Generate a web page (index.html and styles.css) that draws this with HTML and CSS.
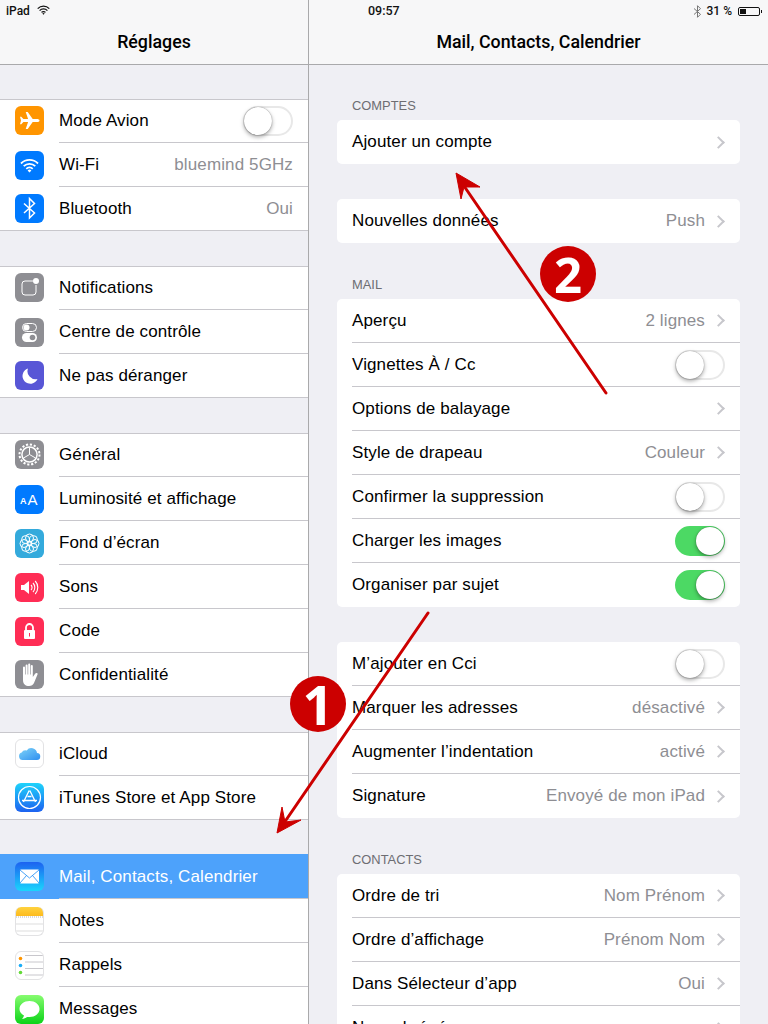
FILE: index.html
```html
<!DOCTYPE html>
<html lang="fr">
<head>
<meta charset="utf-8">
<title>Réglages</title>
<link rel="stylesheet" href="styles.css">
</head>
<body>
<div class="app">
  <aside class="side">
    <header class="nav">
      <div class="status">
        <span>iPad</span>
        <svg class="st-wifi" viewBox="0 0 13 10"><path d="M.7 3.600a8.200 8.200 0 0 1 11.600 0M2.600 5.600a5.400 5.400 0 0 1 7.800 0M4.500 7.400a2.800 2.800 0 0 1 4 0" fill="none" stroke="#111" stroke-width="1.300"/><path d="M6.500 9.800 5.300 8.500a1.700 1.700 0 0 1 2.400 0z" fill="#111"/></svg>
      </div>
      <h1 class="title">Réglages</h1>
    </header>
    <div class="side-body">
      <section class="group">
        <div class="row"><span class="ic ic-orange"><svg viewBox="0 0 29 29"><path d="M24.500 14.500c0-1-1.200-1.500-2.800-1.500h-4l-5-7h-2l2.400 7H8.400L6.300 10.700H5l1 3.800-1 3.800h1.300L8.400 16h4.700L10.700 23h2l5-7h4c1.600 0 2.800-.5 2.800-1.500z" fill="#fff"/></svg></span>
          <div class="body"><span class="lbl">Mode Avion</span><span class="sw"></span></div></div>
        <div class="row"><span class="ic ic-blue"><svg viewBox="0 0 29 29"><path d="M6 12.500a12 12 0 0 1 17 0M8.700 15.200a8.300 8.300 0 0 1 11.600 0M11.300 17.800a4.500 4.500 0 0 1 6.400 0" fill="none" stroke="#fff" stroke-width="1.800"/><path d="M14.500 21.500l-1.900-2a2.700 2.700 0 0 1 3.800 0z" fill="#fff"/></svg></span>
          <div class="body"><span class="lbl">Wi-Fi</span><span class="val">bluemind 5GHz</span></div></div>
        <div class="row"><span class="ic ic-blue"><svg viewBox="0 0 29 29"><path d="M9 9.500 19.500 19l-5 5V4.500l5 5L9 19" fill="none" stroke="#fff" stroke-width="1.500"/></svg></span>
          <div class="body"><span class="lbl">Bluetooth</span><span class="val">Oui</span></div></div>
      </section>
      <section class="group">
        <div class="row"><span class="ic ic-gray"><svg viewBox="0 0 29 29"><path d="M18 8H10a3 3 0 0 0-3 3v8a3 3 0 0 0 3 3h8a3 3 0 0 0 3-3v-7" fill="none" stroke="#fff" stroke-width="1"/><circle cx="21" cy="8" r="3" fill="#fff"/></svg></span>
          <div class="body"><span class="lbl">Notifications</span></div></div>
        <div class="row"><span class="ic ic-gray"><svg viewBox="0 0 29 29"><rect x="7.500" y="5.500" width="14" height="8" rx="4" fill="none" stroke="#fff"/><circle cx="11.500" cy="9.500" r="3" fill="#fff"/><rect x="7" y="15" width="15" height="9" rx="4.500" fill="#fff"/><circle cx="17.500" cy="19.500" r="2.800" fill="#8e8e93"/></svg></span>
          <div class="body"><span class="lbl">Centre de contrôle</span></div></div>
        <div class="row"><span class="ic ic-purple"><svg viewBox="0 0 29 29"><path d="M13 7.500a7.800 7.800 0 1 0 9.500 10.500A8 8 0 0 1 13 7.500z" fill="#fff"/></svg></span>
          <div class="body"><span class="lbl">Ne pas déranger</span></div></div>
      </section>
      <section class="group">
        <div class="row"><span class="ic ic-gray"><svg viewBox="0 0 29 29"><circle cx="14.500" cy="14.500" r="10" fill="none" stroke="#fff" stroke-width="2" stroke-dasharray="2.200 1.730"/><circle cx="14.500" cy="14.500" r="7.600" fill="none" stroke="#fff" stroke-width="1.500"/><path d="M14.500 14.500 14.500 7.500M14.500 14.500 8.500 18M14.500 14.500 20.500 18" stroke="#fff" stroke-width="1"/></svg></span>
          <div class="body"><span class="lbl">Général</span></div></div>
        <div class="row"><span class="ic ic-blue"><svg viewBox="0 0 29 29"><text x="5" y="19" class="aa-s">A</text><text x="12.500" y="20" class="aa-b">A</text></svg></span>
          <div class="body"><span class="lbl">Luminosité et affichage</span></div></div>
        <div class="row"><span class="ic ic-sky"><svg viewBox="0 0 29 29"><g fill="none" stroke="#fff" stroke-width="1"><circle cx="14.500" cy="9" r="4"/><circle cx="14.500" cy="20" r="4"/><circle cx="9" cy="14.500" r="4"/><circle cx="20" cy="14.500" r="4"/><circle cx="10.600" cy="10.600" r="4"/><circle cx="18.400" cy="10.600" r="4"/><circle cx="10.600" cy="18.400" r="4"/><circle cx="18.400" cy="18.400" r="4"/><circle cx="14.500" cy="14.500" r="2.500"/></g></svg></span>
          <div class="body"><span class="lbl">Fond d’écran</span></div></div>
        <div class="row"><span class="ic ic-pink"><svg viewBox="0 0 29 29"><path d="M6 12h3l5-4v13l-5-4H6z" fill="#fff"/><path d="M16 12a3.500 3.500 0 0 1 0 5M18 10a6.500 6.500 0 0 1 0 9M20.200 8a9.500 9.500 0 0 1 0 13" fill="none" stroke="#fff" stroke-width="1.100"/></svg></span>
          <div class="body"><span class="lbl">Sons</span></div></div>
        <div class="row"><span class="ic ic-pink"><svg viewBox="0 0 29 29"><path d="M11 13V10.500a3.500 3.500 0 0 1 7 0V13" fill="none" stroke="#fff" stroke-width="1.800"/><rect x="9" y="13" width="11" height="9" rx="1" fill="#fff"/><rect x="14" y="16" width="1" height="3.500" fill="#ff2d55"/></svg></span>
          <div class="body"><span class="lbl">Code</span></div></div>
        <div class="row"><span class="ic ic-gray"><svg viewBox="0 0 29 29"><path d="M8 7.500a1 1 0 0 1 2 0v7h.6V5.500a1 1 0 0 1 2 0v9h.6V4.500a1 1 0 0 1 2 0v10h.6V6a1 1 0 0 1 2 0v11l2.500-3.500c1-1.200 2.800-.4 2.300.8L19 23c-1 2-2.500 3-5 3-3.500 0-6-2-6-6z" fill="#fff"/></svg></span>
          <div class="body"><span class="lbl">Confidentialité</span></div></div>
      </section>
      <section class="group">
        <div class="row"><span class="ic ic-white"><svg viewBox="0 0 27 27"><defs><linearGradient id="cloud" x1="0" x2="1" y1="0" y2="1"><stop offset="0" stop-color="#7fd4f8"/><stop offset="1" stop-color="#2f8ff0"/></linearGradient></defs><path d="M6.500 20a3.800 3.800 0 0 1-.8-7.400 4.200 4.200 0 0 1 5-2.200 5.700 5.700 0 0 1 10.300 2.600 3.500 3.500 0 0 1-.5 7z" fill="url(#cloud)"/></svg></span>
          <div class="body"><span class="lbl">iCloud</span></div></div>
        <div class="row"><span class="ic ic-store"><svg viewBox="0 0 29 29"><circle cx="14.500" cy="14.500" r="11" fill="none" stroke="#fff" stroke-width="1.200"/><path d="M14.800 7.500 20.500 19M14.200 7.500 8.500 19M7 17.500h15M12.500 13.500h4" fill="none" stroke="#fff" stroke-width="1.300"/></svg></span>
          <div class="body"><span class="lbl">iTunes Store et App Store</span></div></div>
      </section>
      <section class="group group-sel">
        <div class="row row-sel"><span class="ic ic-mail"><svg viewBox="0 0 29 29"><rect x="5" y="7.500" width="19" height="14" rx="1" fill="#fff"/><path d="M5 8l9.500 8L24 8M5 21l6.500-7.500M24 21l-6.500-7.500" fill="none" stroke="#1a8cf5" stroke-width=".8"/></svg></span>
          <div class="body"><span class="lbl">Mail, Contacts, Calendrier</span></div></div>
        <div class="row"><span class="ic ic-notes"><svg viewBox="0 0 27 27"><path d="M0 9.500h27" stroke="#b5b5b5" stroke-dasharray="1 1"/><path d="M0 16.500h27M0 23.500h27" stroke="#ddd"/></svg></span>
          <div class="body"><span class="lbl">Notes</span></div></div>
        <div class="row"><span class="ic ic-white"><svg viewBox="0 0 27 27"><circle cx="4.500" cy="6.500" r="1.800" fill="#ff9500"/><circle cx="4.500" cy="13.500" r="1.800" fill="#1badf8"/><circle cx="4.500" cy="20.500" r="1.800" fill="#63da38"/><path d="M9 3.500h18M9 10h18M9 16.500h18M9 23h18" stroke="#c8c7cc"/></svg></span>
          <div class="body"><span class="lbl">Rappels</span></div></div>
        <div class="row"><span class="ic ic-msg"><svg viewBox="0 0 29 29"><path d="M14.500 6c-5.500 0-10 3.500-10 8 0 2.800 1.800 5.200 4.500 6.600-.3 1.400-1 2.400-2 3.200 2 0 3.800-.8 5-1.900.8.100 1.600.1 2.500.1 5.500 0 10-3.500 10-8s-4.500-8-10-8z" fill="#fff"/></svg></span>
          <div class="body"><span class="lbl">Messages</span></div></div>
      </section>
    </div>
  </aside>
  <main class="detail">
    <header class="nav">
      <div class="status status-main">
        <span class="time">09:57</span>
        <div class="st-right">
          <svg class="st-bt" viewBox="0 0 9 13"><path d="M1 3.500l6.500 5.800-3 3V.7l3 3-6.500 5.800" fill="none" stroke="#777" stroke-width="1"/></svg>
          <span>31 %</span>
          <span class="batt"><span class="batt-fill"></span></span>
        </div>
      </div>
      <h1 class="title">Mail, Contacts, Calendrier</h1>
    </header>
    <div class="detail-body">
      <section>
        <h2 class="sec">COMPTES</h2>
        <div class="card">
          <div class="crow"><span class="lbl">Ajouter un compte</span><span class="chev"></span></div>
        </div>
      </section>
      <section>
        <div class="card">
          <div class="crow"><span class="lbl">Nouvelles données</span><span class="val">Push</span><span class="chev"></span></div>
        </div>
      </section>
      <section>
        <h2 class="sec">MAIL</h2>
        <div class="card">
          <div class="crow"><span class="lbl">Aperçu</span><span class="val">2 lignes</span><span class="chev"></span></div>
          <div class="crow"><span class="lbl">Vignettes À / Cc</span><span class="sw"></span></div>
          <div class="crow"><span class="lbl">Options de balayage</span><span class="chev"></span></div>
          <div class="crow"><span class="lbl">Style de drapeau</span><span class="val">Couleur</span><span class="chev"></span></div>
          <div class="crow"><span class="lbl">Confirmer la suppression</span><span class="sw"></span></div>
          <div class="crow"><span class="lbl">Charger les images</span><span class="sw sw-on"></span></div>
          <div class="crow"><span class="lbl">Organiser par sujet</span><span class="sw sw-on"></span></div>
        </div>
      </section>
      <section>
        <div class="card">
          <div class="crow"><span class="lbl">M’ajouter en Cci</span><span class="sw"></span></div>
          <div class="crow"><span class="lbl">Marquer les adresses</span><span class="val">désactivé</span><span class="chev"></span></div>
          <div class="crow"><span class="lbl">Augmenter l’indentation</span><span class="val">activé</span><span class="chev"></span></div>
          <div class="crow"><span class="lbl">Signature</span><span class="val">Envoyé de mon iPad</span><span class="chev"></span></div>
        </div>
      </section>
      <section>
        <h2 class="sec">CONTACTS</h2>
        <div class="card">
          <div class="crow"><span class="lbl">Ordre de tri</span><span class="val">Nom Prénom</span><span class="chev"></span></div>
          <div class="crow"><span class="lbl">Ordre d’affichage</span><span class="val">Prénom Nom</span><span class="chev"></span></div>
          <div class="crow"><span class="lbl">Dans Sélecteur d’app</span><span class="val">Oui</span><span class="chev"></span></div>
          <div class="crow"><span class="lbl">Nom abrégé</span><span class="chev"></span></div>
        </div>
      </section>
    </div>
  </main>
  <svg class="arrows" viewBox="0 0 768 1024">
    <path d="M428 613 284 823M606 393 464 186" fill="none" stroke="#cc0000" stroke-width="3" stroke-linecap="round"/>
    <path d="M277 833 282 807 285 822 301 820z" fill="#cc0000" stroke="#cc0000" stroke-linejoin="round"/>
    <path d="M456 173 480 187 464 187 461 199z" fill="#cc0000" stroke="#cc0000" stroke-linejoin="round"/>
  </svg>
  <div class="badge badge-one">1</div>
  <div class="badge badge-two">2</div>
</div>
</body>
</html>
```

FILE: styles.css
```css
* { box-sizing: border-box; }
html, body { margin: 0; padding: 0; }
body { font-family: "Liberation Sans", Arial, sans-serif; color: #000; }
.app { position: relative; display: flex; width: 768px; height: 1024px; overflow: hidden; background: #efeff4; }
.side { width: 309px; flex: none; border-right: 1px solid #a9a9ab; }
.detail { flex: 1; min-width: 0; }

.nav { height: 65px; background: #f7f7f8; border-bottom: 1px solid #a9a9ab; display: flex; flex-direction: column; }
.status { height: 22px; padding: 0 0 0 6px; display: flex; align-items: center; gap: 7px; font-family: Roboto, "Liberation Sans", sans-serif; font-weight: 500; font-size: 12px; color: #111; }
.st-wifi { width: 13px; height: 10px; margin-top: -2px; }
.status-main { position: relative; justify-content: flex-end; padding: 0 8px 0 0; }
.time { position: absolute; left: 59px; top: 3px; font-size: 12.500px; }
.st-right { display: flex; align-items: center; gap: 5px; }
.st-bt { width: 9px; height: 13px; }
.batt { position: relative; display: block; width: 22px; height: 9px; border: 1px solid #111; border-radius: 2px; padding: 1px; margin-left: 1px; }
.batt::after { content: ""; position: absolute; right: -3px; top: 2px; width: 1px; height: 3px; background: #111; }
.batt-fill { display: block; width: 6px; height: 5px; background: #111; }
.title { margin: 0; flex: 1; display: flex; align-items: center; justify-content: center; padding-bottom: 4px; font-family: Roboto, "Liberation Sans", sans-serif; font-size: 17.800px; font-weight: 500; }

.side-body { padding-top: 34px; display: flex; flex-direction: column; gap: 35px; }
.group { background: #fff; border-top: 1px solid #c8c7cc; border-bottom: 1px solid #c8c7cc; }
.group-sel { border-top: 0; margin-top: -1px; }
.row { display: flex; align-items: center; height: 44px; padding-left: 15px; }
.group .row:first-child, .group .row:last-child { height: 43px; }
.group .row:first-child .ic { margin-top: -2px; }
.group-sel .row:first-child { height: 45px; }
.group-sel .row:first-child .ic { margin-top: 0; }
.group-sel .row:first-child .body { padding-top: 1px; }
.group-sel .row:last-child { height: 44px; }
.row:last-child .body { border-bottom: 0; }
.row-sel { background: #4da2fb; color: #fff; }
.body { flex: 1; height: 100%; margin-left: 15px; padding-right: 15px; display: flex; align-items: center; justify-content: space-between; border-bottom: 1px solid #c8c7cc; }
.lbl { font-size: 17px; letter-spacing: .12px; }
.val { font-size: 17px; letter-spacing: .12px; color: #8e8e93; }

.ic { width: 29px; height: 29px; flex: none; border-radius: 6px; display: block; overflow: hidden; }
.ic svg { display: block; width: 100%; height: 100%; }
.ic-orange { background: #ff9500; }
.ic-blue { background: #007aff; }
.ic-gray { background: #8e8e93; }
.ic-purple { background: #5856d6; }
.ic-sky { background: #34aadc; }
.ic-pink { background: #ff2d55; }
.ic-white { background: #fff; border: 1px solid #e2e2e4; }
.ic-store { background: linear-gradient(#1ed3fb, #1d62f0); }
.ic-mail { background: linear-gradient(#1d62f0, #1ad6fd); }
.ic-notes { background: linear-gradient(#ffd23f 0, #fdbb1e 9px, #fff 9px); border: 1px solid #e2e2e4; border-top: 0; }
.ic-msg { background: linear-gradient(#87fc70, #0bd318); }
.aa-s { font: 700 9px "Liberation Sans", sans-serif; fill: #fff; }
.aa-b { font: 400 15px "Liberation Sans", sans-serif; fill: #fff; }

.sw { position: relative; display: block; width: 50px; height: 30px; flex: none; border: 2px solid #e8e8e8; border-radius: 15px; background: #fff; margin-left: auto; }
.sw::after { content: ""; position: absolute; left: -1px; top: -1px; width: 28px; height: 28px; border-radius: 50%; background: #fff; box-shadow: 0 2px 4px rgba(0,0,0,.35), 0 0 1px rgba(0,0,0,.5); }
.sw-on { background: #4cd964; border-color: #4cd964; }
.sw-on::after { left: auto; right: -1px; }

.detail-body { padding: 34px 28px 0; display: flex; flex-direction: column; gap: 35px; }
.sec { margin: 0; height: 21px; padding: 0 0 0 15px; font-size: 12.900px; font-weight: 400; color: #6d6d72; line-height: 13px; }
.card { background: #fff; border-radius: 5px; padding-left: 15px; }
.crow { height: 44px; padding-right: 15px; display: flex; align-items: center; border-bottom: 1px solid #c8c7cc; }
.crow:last-child { border-bottom: 0; }
.crow .lbl { margin-right: auto; }
.chev { display: block; width: 9px; height: 9px; flex: none; margin: 0 2px 0 9px; border-top: 2px solid #c7c7cc; border-right: 2px solid #c7c7cc; transform: rotate(45deg); }

.arrows { position: absolute; left: 0; top: 0; width: 768px; height: 1024px; pointer-events: none; }
.badge { position: absolute; width: 56px; height: 56px; border-radius: 50%; background: #cc0000; color: #fff; display: flex; align-items: center; justify-content: center; font-family: "Open Sans", sans-serif; font-weight: 700; line-height: 1; }
.badge-one { left: 290px; top: 676px; font-size: 54px; }
.badge-two { left: 540px; top: 246px; font-size: 49px; }
```
